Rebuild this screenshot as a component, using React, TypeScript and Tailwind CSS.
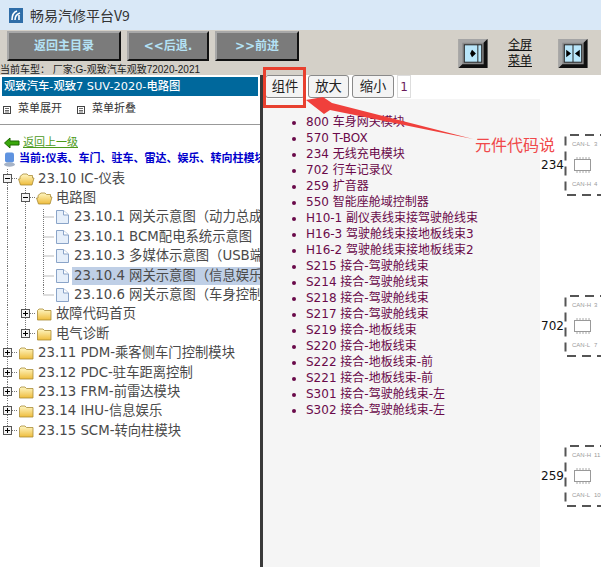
const font = "[font-family:'DejaVu_Sans','Noto_Sans_CJK_SC',sans-serif]"

const parts = [
  '800 车身网关模块',
  '570 T-BOX',
  '234 无线充电模块',
  '702 行车记录仪',
  '259 扩音器',
  '550 智能座舱域控制器',
  'H10-1 副仪表线束接驾驶舱线束',
  'H16-3 驾驶舱线束接地板线束3',
  'H16-2 驾驶舱线束接地板线束2',
  'S215 接合-驾驶舱线束',
  'S214 接合-驾驶舱线束',
  'S218 接合-驾驶舱线束',
  'S217 接合-驾驶舱线束',
  'S219 接合-地板线束',
  'S220 接合-地板线束',
  'S222 接合-地板线束-前',
  'S221 接合-地板线束-前',
  'S301 接合-驾驶舱线束-左',
  'S302 接合-驾驶舱线束-左',
]

function Expander({ open, last }: { open?: boolean; last?: boolean }) {
  return (
    <svg width="18" height="20" className="shrink-0">
      <path d={last ? 'M7.5 0V5' : 'M7.5 0V20'} stroke="#777" strokeDasharray="1 1" />
      <path d="M12 9.5H18" stroke="#777" strokeDasharray="1 1" />
      <rect x="3.5" y="5.5" width="8" height="8" fill="#f4f4f4" stroke="#555" />
      <path d="M5 9.5H10" stroke="#000" />
      {!open && <path d="M7.5 7V12" stroke="#000" />}
    </svg>
  )
}

function Folder({ open }: { open?: boolean }) {
  return (
    <svg width="17" height="16" viewBox="0 0 17 16" className="shrink-0 mr-[3px]">
      <defs>
        <linearGradient id="fold" x1="0" y1="0" x2="0" y2="1">
          <stop offset="0" stopColor="#fff7c4" />
          <stop offset="1" stopColor="#eebc3c" />
        </linearGradient>
      </defs>
      {open ? (
        <path d="M2 5.5 L5 3 H9 L10.5 4.5 H14.5 V7 H16 L14 14 H2.5 L0.5 8 H2Z" fill="url(#fold)" stroke="#a88a35" strokeWidth="0.8" />
      ) : (
        <path d="M1.5 4.5 L3 3 H7 L8.5 4.5 H15 V14 H1.5Z" fill="url(#fold)" stroke="#a88a35" strokeWidth="0.8" />
      )}
    </svg>
  )
}

function Page() {
  return (
    <svg width="18" height="20" viewBox="0 0 18 20" className="shrink-0">
      <path d="M2.5 3.5H9.5L14.5 8V16.5H2.5Z" fill="#e6effa" stroke="#8aa4c8" />
      <path d="M9.5 3.5V8H14.5" fill="#fff" stroke="#8aa4c8" />
    </svg>
  )
}

function Indent() {
  return (
    <span className="w-[18px] h-full pl-[7px] shrink-0">
      <span className="block h-full border-l border-dotted border-[#777]" />
    </span>
  )
}

function Connector({ last }: { last?: boolean }) {
  return (
    <svg width="18" height="20" className="shrink-0">
      <path d={last ? 'M7.5 0V10' : 'M7.5 0V20'} stroke="#777" strokeDasharray="1 1" />
      <path d="M7.5 10H18" stroke="#777" strokeDasharray="1 1" />
    </svg>
  )
}

function Row({ children }: { children: React.ReactNode }) {
  return <div className="flex items-center h-[19.4px] whitespace-nowrap text-[13.33px] text-[#4a4a4a] overflow-hidden">{children}</div>
}

function Leaf({ label, last, active }: { label: string; last?: boolean; active?: boolean }) {
  return (
    <Row>
      <Indent />
      <Indent />
      <Connector last={last} />
      <Page />
      <span className={`pl-[2px] pr-[20px] leading-[18px] ${active ? 'bg-[#bfcfe6]' : ''}`}>{label}</span>
    </Row>
  )
}

function BarButton({ label, className }: { label: string; className: string }) {
  return (
    <div className={`h-[30px] flex items-center justify-center bg-[#7b7b7b] border-2 border-t-[#a8a8a8] border-l-[#a8a8a8] border-r-[#111] border-b-[#111] text-[12px] font-bold text-[#b4e2f5] ${className}`}>
      {label}
    </div>
  )
}

function Collapse({ double }: { double?: boolean }) {
  return (
    <svg width="30" height="29" viewBox="0 0 30 30" className="shrink-0">
      <rect width="30" height="30" fill="#8a8a8a" />
      <path d="M0 0H30L26 4H4V26L0 30Z" fill="#a5a5a5" />
      <path d="M30 0V30H0L4 26H26V4Z" fill="#111" />
      <rect x="6" y="6" width="18" height="18" fill="#b9e6fa" stroke="#222" />
      {double ? (
        <>
          <path d="M15 6V24" stroke="#222" />
          <path d="M8 11L13 15L8 19Z M22 11L17 15L22 19Z" fill="#000" />
        </>
      ) : (
        <>
          <path d="M20 6V24" stroke="#222" />
          <path d="M14 11L18 15L14 19L12 15Z" fill="#000" />
        </>
      )}
    </svg>
  )
}

function MenuGlyph() {
  return (
    <svg width="8" height="8" viewBox="0 0 8 8" className="shrink-0">
      <rect x="0.5" y="0.5" width="7" height="7" fill="#fff" stroke="#444" />
      <path d="M2 2.5H6M2 4.5H6M2 6H6" stroke="#444" strokeWidth="0.8" />
    </svg>
  )
}

function TabButton({ label, className }: { label: string; className: string }) {
  return (
    <div className={`h-[23px] flex items-center justify-center border border-[#8a8a8a] rounded-[3px] bg-[#f4f4f4] text-[13.33px] text-[#222] ${className}`}>
      {label}
    </div>
  )
}

function Module({ code, top, a, an, b, bn }: { code: string; top: string; a: string; an: string; b: string; bn: string }) {
  return (
    <div className={`absolute left-[278px] ${top} flex items-center`}>
      <span className="w-[21px] text-[12px] text-[#111] text-right">{code}</span>
      <div className="relative w-[60px] h-[62px] ml-[2px] [font-family:'Liberation_Sans',sans-serif] text-[6px] leading-[8px] text-[#999]">
        <svg width="60" height="62" className="absolute left-0 top-0">
          <path d="M60 1H1.5V61H60" fill="none" stroke="#555" strokeWidth="2" strokeDasharray="9 6" />
        </svg>
        <span className="absolute left-[8px] top-[6px]">{a}</span>
        <span className="absolute left-[30px] top-[6px]">{an}</span>
        <svg width="20" height="18" viewBox="0 0 20 18" className="absolute left-[9px] top-[22px]">
          <rect x="1.5" y="3.5" width="16" height="11" fill="#fff" stroke="#999" />
          <path d="M4 3V1M7 3V1M10 3V1M13 3V1M16 3V1M4 15V17M7 15V17M10 15V17M13 15V17M16 15V17" stroke="#aaa" />
        </svg>
        <span className="absolute left-[8px] top-[46px]">{b}</span>
        <span className="absolute left-[30px] top-[46px]">{bn}</span>
      </div>
    </div>
  )
}

export default function App() {
  return (
    <div className={`w-[601px] h-[567px] overflow-hidden flex flex-col bg-white relative ${font}`}>
      <div className="h-[30px] bg-[#d9e8f7] flex items-center pl-[9px]">
        <svg width="14" height="15" viewBox="0 0 14 15" className="mr-[7px]">
          <rect width="14" height="15" fill="#2f6da8" />
          <path d="M3 12C3 7 5 4 8 3M6 12C6 9 8 6 11 5M10 7V12" stroke="#fff" strokeWidth="1.6" fill="none" />
        </svg>
        <span className="text-[14px] text-[#333] [font-family:'Noto_Sans_CJK_SC',sans-serif]">畅易汽修平台V9</span>
      </div>

      <div className="h-[45px] bg-[#d4d0c8] relative">
        <div className="flex gap-[6px] pl-[7px] pt-[1px]">
          <BarButton label="返回主目录" className="w-[114px]" />
          <BarButton label="<<后退." className="w-[82px]" />
          <BarButton label=">>前进" className="w-[84px]" />
        </div>
        <div className="absolute left-[458px] top-[9px] flex items-center">
          <Collapse />
          <div className="w-[64px] mr-[6px] -mt-[4px] text-center text-[12px] leading-[16px] text-[#111] underline [font-family:'Noto_Sans_CJK_SC',sans-serif]">全屏<br />菜单</div>
          <Collapse double />
        </div>
        <div className="absolute left-0 top-[35px] text-[10px] leading-[10px] text-[#222] whitespace-nowrap [font-family:'Liberation_Sans','Noto_Sans_CJK_SC',sans-serif]">当前车型： 厂家:G-观致汽车观致72020-2021</div>
      </div>

      <div className="flex flex-1 min-h-0">
        <div className="w-[260px] shrink-0 overflow-hidden">
          <div className="mt-[2px] mx-[2px] h-[19px] bg-[#00689c] text-white text-[11.33px] font-medium leading-[19px] pl-[2px] whitespace-nowrap">观致汽车-观致7 SUV-2020-电路图</div>
          <div className="h-[29px] border-b border-[#999] flex items-center pl-[3px] pb-[1px] text-[11px] text-[#333]">
            <MenuGlyph />
            <span className="ml-[7px]">菜单展开</span>
            <span className="ml-[15px]"><MenuGlyph /></span>
            <span className="ml-[7px]">菜单折叠</span>
          </div>
          <div className="flex items-center pl-[4px] mt-[10px] h-[16px]">
            <svg width="16" height="12" viewBox="0 0 16 12" className="mr-[3px]">
              <path d="M0.5 6L6 1V4H15V8H6V11Z" fill="#3aa80c" stroke="#1c6a00" />
            </svg>
            <span className="text-[11px] text-[#4c9a1a] underline">返回上一级</span>
          </div>
          <div className="flex items-center h-[16px] pl-[3px] whitespace-nowrap">
            <svg width="13" height="15" viewBox="0 0 13 15" className="mr-[3px] shrink-0">
              <rect x="2" y="0.5" width="9" height="10" rx="2" fill="#5f93e0" />
              <ellipse cx="6.5" cy="12.5" rx="5.5" ry="2.2" fill="#a6b3c6" />
            </svg>
            <span className="text-[11px] font-bold text-[#0000cc]">当前:仪表、车门、驻车、雷达、娱乐、转向柱模块</span>
          </div>

          <div className="mt-[2px]">
            <Row><Expander open /><Folder open /><span>23.10 IC-仪表</span></Row>
            <Row><Indent /><Expander open /><Folder open /><span>电路图</span></Row>
            <Leaf label="23.10.1 网关示意图（动力总成" />
            <Leaf label="23.10.1 BCM配电系统示意图" />
            <Leaf label="23.10.3 多媒体示意图（USB端" />
            <Leaf label="23.10.4 网关示意图（信息娱乐" active />
            <Leaf label="23.10.6 网关示意图（车身控制" last />
            <Row><Indent /><Expander /><Folder /><span>故障代码首页</span></Row>
            <Row><Indent /><Expander last /><Folder /><span>电气诊断</span></Row>
            <Row><Expander /><Folder /><span>23.11 PDM-乘客侧车门控制模块</span></Row>
            <Row><Expander /><Folder /><span>23.12 PDC-驻车距离控制</span></Row>
            <Row><Expander /><Folder /><span>23.13 FRM-前雷达模块</span></Row>
            <Row><Expander /><Folder /><span>23.14 IHU-信息娱乐</span></Row>
            <Row><Expander last /><Folder /><span>23.15 SCM-转向柱模块</span></Row>
          </div>
        </div>

        <div className="w-[3px] shrink-0 bg-[#3a3a3a]" />

        <div className="flex-1 relative overflow-hidden">
          <div className="flex items-center gap-[3px] pl-[2px]">
            <TabButton label="组件" className="w-[40px]" />
            <TabButton label="放大" className="w-[41px]" />
            <TabButton label="缩小" className="w-[42px]" />
            <span className="h-[23px] w-[14px] border border-[#ddd] flex items-center justify-center text-[12px] text-[#6a1a5a]">1</span>
          </div>
          <div className="w-[277px] h-[468px] mt-[1px] bg-[#f5f5f5] pt-[15px] pl-[43px]">
            <ul className="list-disc text-[12px] leading-[16px] text-[#6a0a4a] whitespace-nowrap">
              {parts.map(p => (
                <li key={p}>{p}</li>
              ))}
            </ul>
          </div>
          <Module code="234" top="top-[59px]" a="CAN-L" an="3" b="CAN-H" bn="4" />
          <Module code="702" top="top-[220px]" a="CAN-H" an="3" b="CAN-L" bn="7" />
          <Module code="259" top="top-[370px]" a="CAN-H" an="11" b="CAN-L" bn="10" />
        </div>
      </div>

      <div className="absolute left-[263px] top-[67px] w-[43px] h-[41px] border-[3px] border-[#e8402f]" />
      <svg width="601" height="567" className="absolute left-0 top-0 pointer-events-none">
        <polygon points="306,100 323,97 332,103 473,139 330,110 324,114" fill="#f0403c" />
      </svg>
      <span className="absolute left-[475px] top-[134px] text-[16px] leading-[20px] text-[#f0484a] whitespace-nowrap [font-family:'Noto_Sans_CJK_SC',sans-serif]">元件代码说</span>
    </div>
  )
}
